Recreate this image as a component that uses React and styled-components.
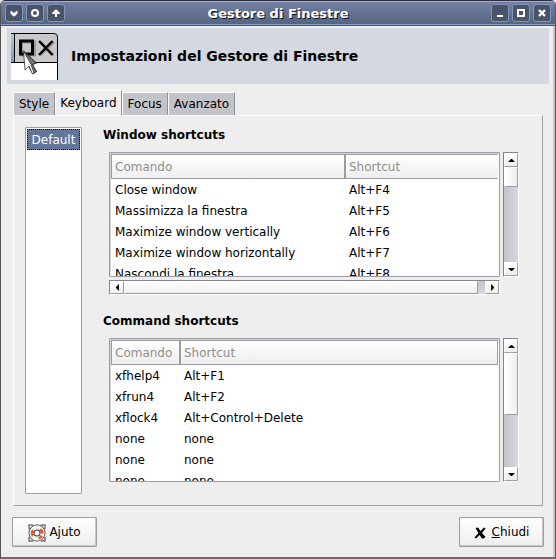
import React, { useState } from "react";
import styled, { createGlobalStyle, css } from "styled-components";

const GlobalStyle = createGlobalStyle`
  *, *::before, *::after { box-sizing: border-box; }
  body {
    margin: 0;
    background: #eeeeee;
    color: #000;
    font: 12px/15px "DejaVu Sans", sans-serif;
  }
  button { font: inherit; color: inherit; margin: 0; padding: 0; cursor: default; }
`;

const raised = css`
  background: linear-gradient(#ffffff, #eeeeee);
  border: 1px solid;
  border-color: #ffffff #9c9ca2 #9c9ca2 #ffffff;
`;

const Window = styled.div`
  display: flex;
  flex-direction: column;
  min-height: 100vh;
  background: #eeeeee;
  border: 1px solid #55555c;
  border-top: 0;
  border-radius: 5px 5px 0 0;
  box-shadow: inset -2px -2px 0 #c6c6c8;
  overflow: hidden;
`;

const TitleBar = styled.header`
  display: flex;
  align-items: center;
  gap: 3px;
  height: 26px;
  padding: 0 4px;
  border-top: 1px solid #2c2c40;
  border-bottom: 1px solid #46546c;
  background: linear-gradient(#7581a4, #54657f);
  box-shadow: inset 0 1px 0 #a9adc0, inset 0 -1px 0 #8a9fc3;
`;

const WindowTitle = styled.h1`
  flex: 1;
  margin: 0;
  padding-top: 1px;
  text-align: center;
  font-size: 13px;
  line-height: 15px;
  font-weight: bold;
  color: #fff;
  text-shadow: 1px 1px 0 #101020;
`;

const TitleButton = styled.button`
  display: grid;
  place-items: center;
  width: 18px;
  height: 18px;
  border: 1px solid #8397bd;
  border-radius: 3px;
  background: #4a5468;
  color: #fff;
`;

const Banner = styled.div`
  display: flex;
  align-items: center;
  gap: 13px;
  height: 56px;
  margin: 2px 6px 0;
  padding: 0 4px;
  background: #d3d8e1;
`;

const BannerTitle = styled.h2`
  margin: 0;
  font-size: 14px;
  line-height: 18px;
  font-weight: bold;
`;

const Notebook = styled.main`
  flex: 1;
  display: flex;
  flex-direction: column;
  padding: 6px 12px 0;
`;

const TabBar = styled.div`
  display: flex;
  align-items: flex-end;
`;

const Tab = styled.button`
  height: ${(p) => (p.$active ? 26 : 23)}px;
  padding: ${(p) => (p.$active ? "0 4px" : "1px 5px 0")};
  margin-bottom: ${(p) => (p.$active ? -1 : 0)}px;
  border: 1px solid;
  border-color: #ffffff #8e8e94 transparent #ffffff;
  border-bottom: 0;
  background: ${(p) => (p.$active ? "#eeeeee" : "#c3c3ca")};
`;

const Panel = styled.section`
  flex: 1;
  display: flex;
  gap: 21px;
  padding: 11px 23px 11px 11px;
  border: 1px solid;
  border-color: #ffffff #a0a0a6 #a0a0a6 #ffffff;
`;

const Sunken = styled.div`
  background: #fff;
  border: 1px solid #9c9ca2;
  border-radius: 1px;
  padding: 1px;
  overflow: hidden;
`;

const ThemeList = styled(Sunken)`
  flex: none;
  width: 57px;
`;

const ThemeItem = styled.button`
  display: block;
  width: 100%;
  height: 21px;
  padding-top: 1px;
  border: 1px dotted #000;
  background: #64759a;
  color: #fff;
  white-space: nowrap;
`;

const Editor = styled.div`
  flex: 1;
  min-width: 0;
  display: flex;
  flex-direction: column;
  gap: 18px;
  padding-bottom: 12px;
`;

const SectionTitle = styled.h3`
  margin: 0 0 8px;
  font-size: 12px;
  line-height: 17px;
  font-weight: bold;
`;

const ScrollArea = styled.div`
  display: grid;
  grid-template-columns: minmax(0, 1fr) 16px;
  gap: 3px;
  margin-left: 6px;
`;

const TableFrame = styled(Sunken)`
  height: ${(p) => p.$height}px;
  box-shadow: inset 1px 1px 0 #d3d3d9;
`;

const Table = styled.table`
  width: 100%;
  table-layout: fixed;
  border-collapse: separate;
  border-spacing: 0;
`;

const HeadCell = styled.th`
  width: ${(p) => (p.$width ? `${p.$width}px` : "auto")};
  height: 25px;
  padding: 2px 3px 0;
  text-align: left;
  font-weight: normal;
  color: #8f8f88;
  background: linear-gradient(#ffffff, #eeeeee);
  border: 1px solid #9c9ca2;
  border-right-color: ${(p) => (p.$open ? "transparent" : "#9c9ca2")};
`;

const Cell = styled.td`
  height: 21px;
  padding: 2px 4px 0;
  white-space: nowrap;
`;

const Track = styled.div`
  display: flex;
  flex-direction: ${(p) => (p.$horizontal ? "row" : "column")};
  height: ${(p) => (p.$horizontal ? "15px" : "auto")};
  border: 1px solid;
  border-color: #84848e #ffffff #ffffff #84848e;
  background: linear-gradient(${(p) => (p.$horizontal ? "180deg" : "90deg")}, #c3c3ca, #d6d6dd);
`;

const Arrow = styled.button`
  ${raised}
  flex: none;
  display: grid;
  place-items: center;
  width: 14px;
  height: ${(p) => (p.$horizontal ? 13 : 14)}px;
`;

const Travel = styled.div`
  flex: 1;
  display: flex;
  flex-direction: ${(p) => (p.$horizontal ? "row" : "column")};
`;

const Thumb = styled.div`
  ${raised}
  background: linear-gradient(${(p) => (p.$horizontal ? "180deg" : "90deg")}, #ffffff, #eeeeee);
  flex: 0 0 ${(p) => p.$share}%;
`;

const Footer = styled.footer`
  display: flex;
  justify-content: space-between;
  padding: 11px 11px 10px;
  border-bottom: 2px solid #6c6c70;
`;

const ActionButton = styled.button`
  display: flex;
  align-items: center;
  justify-content: center;
  gap: ${(p) => p.$gap}px;
  width: 85px;
  height: 30px;
  padding-top: 1px;
  border: 1px solid #9c9ca2;
  border-radius: 1px;
  background: linear-gradient(#ffffff, #eeeeee);
  box-shadow: inset -1px -1px 0 #c8c8cc;
`;

const Svg = styled.svg`
  display: block;
  flex: none;
`;

const glyphs = {
  menu: <path d="M1 2l3 2.500L7 2v2.500L4.500 7h-1L1 4.500z" fill="currentColor" stroke="currentColor" />,
  stick: <circle cx="4" cy="4" r="3" fill="none" stroke="currentColor" strokeWidth="2" />,
  shade: <path d="M0 4L4 0l4 4v1H5v3H3V5H0z" fill="currentColor" />,
  minimize: <path d="M1 6h6v2H1z" fill="currentColor" />,
  maximize: <rect x="1" y="1" width="6" height="6" fill="none" stroke="currentColor" strokeWidth="2" />,
  close: <path d="M1 1l6 6M7 1L1 7" stroke="currentColor" strokeWidth="2.400" />,
};

const arrowShapes = {
  up: "M0 5h7L4 2H3z",
  down: "M0 2h7L4 5H3z",
  left: "M5 0v7L2 4V3z",
  right: "M2 0v7l3-3V3z",
};

function WindowButton({ kind, label }) {
  return (
    <TitleButton aria-label={label}>
      <Svg width="8" height="8" viewBox="0 0 8 8">{glyphs[kind]}</Svg>
    </TitleButton>
  );
}

function ScrollArrow({ direction, label }) {
  const horizontal = direction === "left" || direction === "right";
  return (
    <Arrow $horizontal={horizontal} aria-label={label}>
      <Svg width="7" height="7" viewBox="0 0 7 7"><path d={arrowShapes[direction]} /></Svg>
    </Arrow>
  );
}

function ScrollBar({ horizontal, share }) {
  return (
    <Track $horizontal={horizontal}>
      <ScrollArrow direction={horizontal ? "left" : "up"} label="Indietro" />
      <Travel $horizontal={horizontal}>
        <Thumb $horizontal={horizontal} $share={share} />
      </Travel>
      <ScrollArrow direction={horizontal ? "right" : "down"} label="Avanti" />
    </Track>
  );
}

function ShortcutTable({ title, rows, height, firstWidth, share, horizontalShare }) {
  return (
    <section>
      <SectionTitle>{title}</SectionTitle>
      <ScrollArea>
        <TableFrame $height={height}>
          <Table aria-label={title}>
            <thead>
              <tr>
                <HeadCell $width={firstWidth}>Comando</HeadCell>
                <HeadCell $open={Boolean(horizontalShare)}>Shortcut</HeadCell>
              </tr>
            </thead>
            <tbody>
              {rows.map(([command, shortcut], i) => (
                <tr key={i}>
                  <Cell>{command}</Cell>
                  <Cell>{shortcut}</Cell>
                </tr>
              ))}
            </tbody>
          </Table>
        </TableFrame>
        <ScrollBar share={share} />
        {horizontalShare && <ScrollBar horizontal share={horizontalShare} />}
      </ScrollArea>
    </section>
  );
}

function ManagerIcon() {
  return (
    <Svg width="47" height="47" viewBox="0 0 47 47">
      <defs>
        <linearGradient id="strip" x2="0" y2="1">
          <stop stopColor="#b5c8dc" />
          <stop offset="1" stopColor="#7f9bbb" />
        </linearGradient>
      </defs>
      <path d="M0 29h46v18H0z" fill="#fff" />
      <path d="M0 1h3v28H0z" fill="url(#strip)" />
      <path d="M4 1h39l3 3v25H4z" fill="#cbc8ca" />
      <path d="M0 .5h43q3.500 0 3.500 3.500v43M3.500 1v28M0 29.500h46" fill="none" stroke="#000" />
      <path d="M10.500 9h13v13h-13z" fill="none" stroke="#999" strokeWidth="3" />
      <path d="M9.500 8h12v13h-12z" fill="none" stroke="#000" strokeWidth="3" />
      <path d="M29.500 9l13 13M43 9L29.500 22" stroke="#999" strokeWidth="2.500" />
      <path d="M28 8l13.500 14M41.500 8L28 22" stroke="#000" strokeWidth="2.500" />
      <path d="M12.500 18l13 12-4 1.500 4 7-3.500 2.500-4-7z" fill="#77736c" stroke="#222" />
      <path d="M12.500 18l1.500 19 4-4 3.500 8 1.500-1-3-8.500z" fill="#fff" stroke="#333" strokeWidth=".8" />
    </Svg>
  );
}

function LifebuoyIcon() {
  return (
    <Svg width="18" height="18" viewBox="0 0 18 18">
      <path d="M5 1H1v4M13 1h4v4M17 13v4h-4M5 17H1v-4" fill="none" stroke="#777" strokeWidth="1.500" />
      <circle cx="9" cy="9" r="5.500" fill="none" stroke="#3c3c3c" strokeWidth="6" />
      <circle cx="9" cy="9" r="5.600" fill="none" stroke="#f4f4f4" strokeWidth="4.200" />
      <path d="M4 5.200l2 1.800q-.8 2 0 4L4 12.800q-2.500-3.800 0-7.600zM13 4.200q3.200 2.800 2.600 5.600l-2.800-.2Q12.800 7.500 11 6.400zM15 12q-1.500 3-4 3.600L10.300 13q1.500-.4 2.300-1.800z" fill="#e8552c" />
    </Svg>
  );
}

function CrossIcon() {
  return (
    <Svg width="12" height="12" viewBox="0 0 12 12">
      <path d="M1.500 1l2.500-.5L6.500 4 10 .5l1.500 1L8 6l3.500 4-2 1.500H8L5.500 8 2 11.500.5 10.500 4.500 6z" fill="#000" />
    </Svg>
  );
}

const tabs = ["Style", "Keyboard", "Focus", "Avanzato"];

const windowShortcuts = [
  ["Close window", "Alt+F4"],
  ["Massimizza la finestra", "Alt+F5"],
  ["Maximize window vertically", "Alt+F6"],
  ["Maximize window horizontally", "Alt+F7"],
  ["Nascondi la finestra", "Alt+F8"],
];

const commandShortcuts = [
  ["xfhelp4", "Alt+F1"],
  ["xfrun4", "Alt+F2"],
  ["xflock4", "Alt+Control+Delete"],
  ["none", "none"],
  ["none", "none"],
  ["none", "none"],
];

export default function App() {
  const [active, setActive] = useState("Keyboard");
  return (
    <>
      <GlobalStyle />
      <Window>
        <TitleBar>
          <WindowButton kind="menu" label="Menu" />
          <WindowButton kind="stick" label="Fissa" />
          <WindowButton kind="shade" label="Arrotola" />
          <WindowTitle>Gestore di Finestre</WindowTitle>
          <WindowButton kind="minimize" label="Minimizza" />
          <WindowButton kind="maximize" label="Massimizza" />
          <WindowButton kind="close" label="Chiudi finestra" />
        </TitleBar>
        <Banner>
          <ManagerIcon />
          <BannerTitle>Impostazioni del Gestore di Finestre</BannerTitle>
        </Banner>
        <Notebook>
          <TabBar role="tablist">
            {tabs.map((tab) => (
              <Tab
                key={tab}
                role="tab"
                aria-selected={tab === active}
                $active={tab === active}
                onClick={() => setActive(tab)}
              >
                {tab}
              </Tab>
            ))}
          </TabBar>
          <Panel role="tabpanel" aria-label={active}>
            <ThemeList>
              <ThemeItem aria-pressed="true">Default</ThemeItem>
            </ThemeList>
            <Editor>
              <ShortcutTable
                title="Window shortcuts"
                rows={windowShortcuts}
                height={125}
                firstWidth={234}
                share={21}
                horizontalShare={98}
              />
              <ShortcutTable
                title="Command shortcuts"
                rows={commandShortcuts}
                height={144}
                firstWidth={69}
                share={54}
              />
            </Editor>
          </Panel>
        </Notebook>
        <Footer>
          <ActionButton $gap={3}>
            <LifebuoyIcon />
            <span>A<u>j</u>uto</span>
          </ActionButton>
          <ActionButton $gap={6}>
            <CrossIcon />
            <span><u>C</u>hiudi</span>
          </ActionButton>
        </Footer>
      </Window>
    </>
  );
}
